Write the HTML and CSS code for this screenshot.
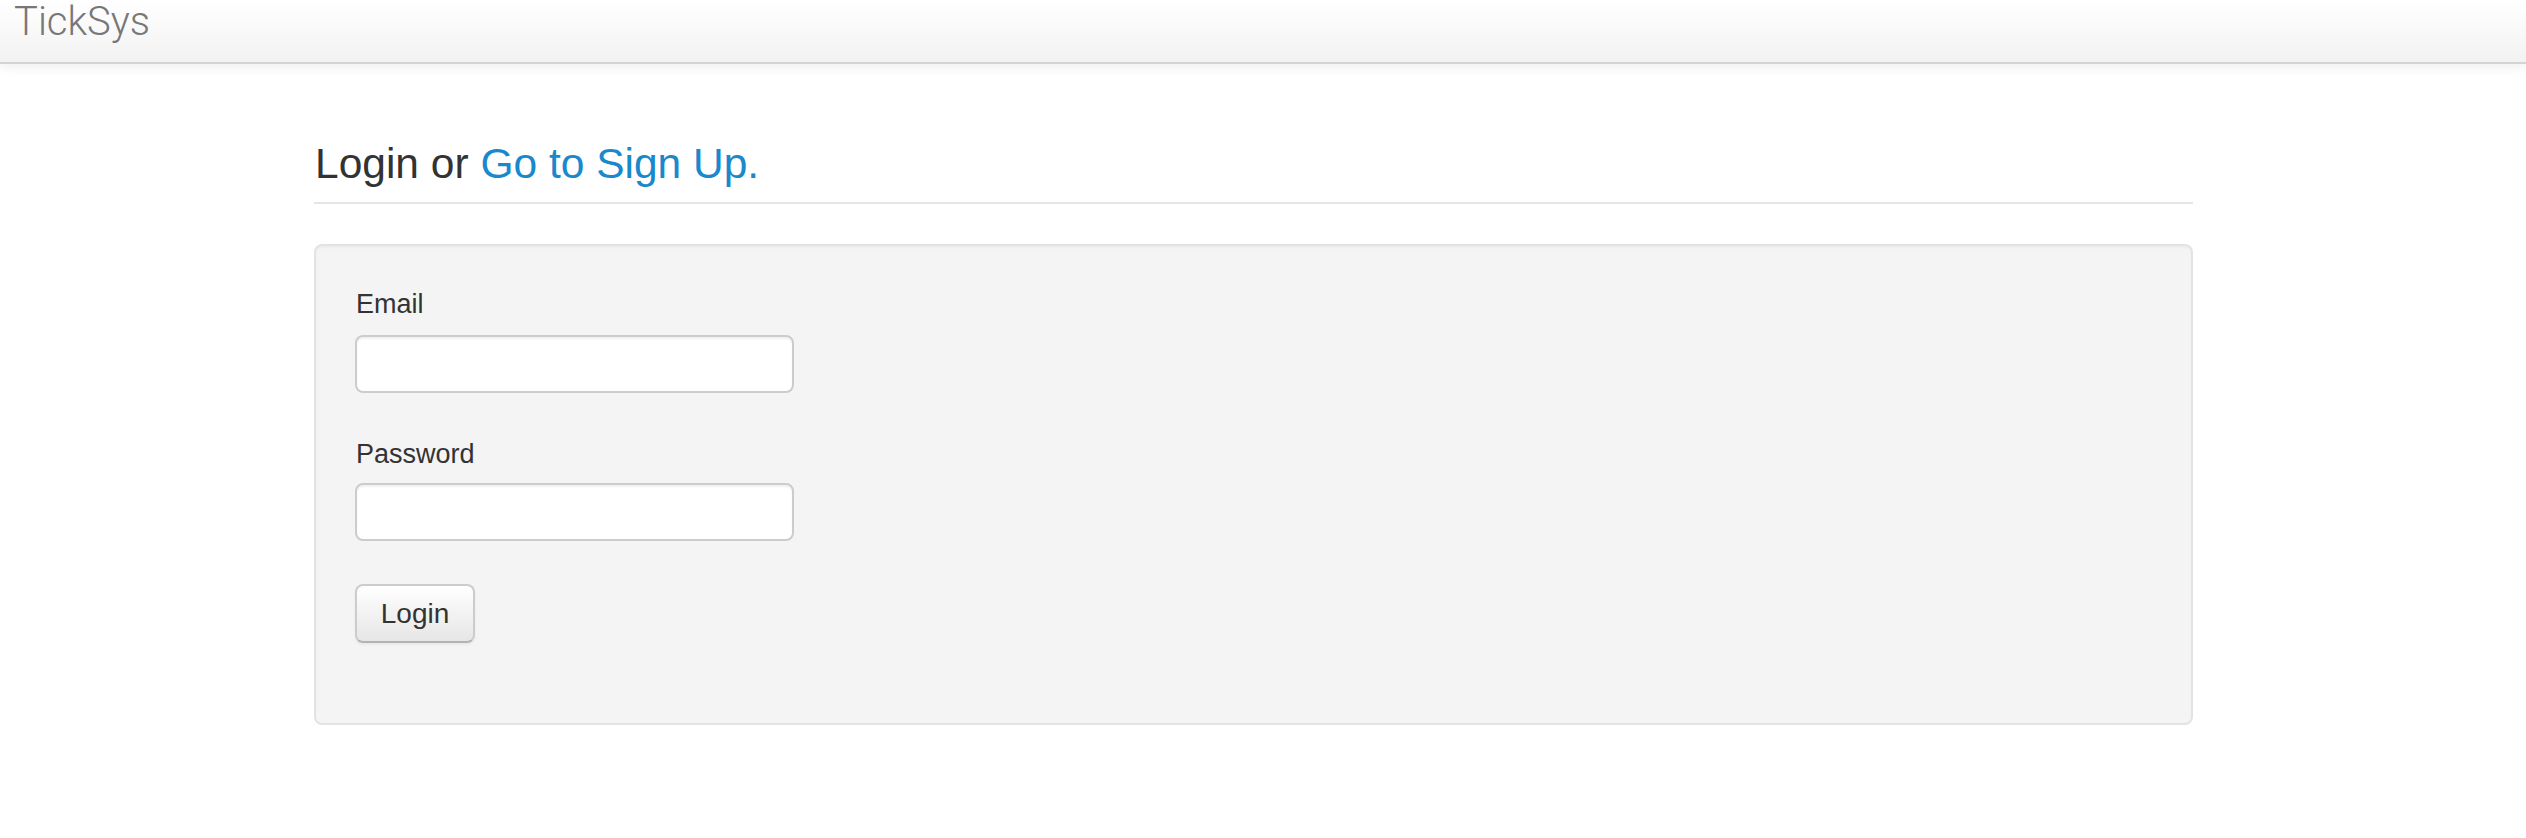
FILE: index.html
```html
<!DOCTYPE html>
<html>
<head>
<meta charset="utf-8">
<title>TickSys</title>
<link rel="stylesheet" href="styles.css">
</head>
<body>
<header class="navbar">
  <a class="brand" href="#">TickSys</a>
</header>
<main class="container">
  <h1 class="page-title">Login or <a href="#" class="link">Go to Sign Up.</a></h1>
  <form class="well">
    <div class="group">
      <label class="label" for="email">Email</label>
      <input class="field" id="email" type="text">
    </div>
    <div class="group">
      <label class="label" for="password">Password</label>
      <input class="field" id="password" type="password">
    </div>
    <button class="btn" type="button">Login</button>
  </form>
</main>
</body>
</html>
```
FILE: styles.css
```css
html, body {
  margin: 0;
  padding: 0;
  background: #ffffff;
  font-family: "Liberation Sans", Arial, sans-serif;
  color: #333333;
}

.navbar {
  height: 62px;
  background: linear-gradient(#ffffff, #f2f2f2);
  border-bottom: 2px solid #d4d4d4;
  box-shadow: 0 2px 12px rgba(0, 0, 0, 0.08);
}

.brand {
  display: block;
  padding-left: 14px;
  font-family: Roboto, "Liberation Sans", sans-serif;
  font-weight: 300;
  font-size: 40px;
  line-height: 44px;
  color: #777777;
  text-decoration: none;
}

.container {
  width: 1879px;
  margin-left: 314px;
}

.page-title {
  margin: 76px 0 0;
  padding: 0 0 14px 1px;
  font-size: 42.5px;
  font-weight: normal;
  line-height: 48px;
  border-bottom: 2px solid #e5e5e5;
}

.link {
  color: #1a88cc;
  text-decoration: none;
}

.well {
  margin-top: 40px;
  padding: 40px 39px 80px;
  background: #f4f4f4;
  border: 2px solid #e3e3e3;
  border-radius: 8px;
  box-shadow: inset 0 2px 2px rgba(0, 0, 0, 0.03);
}

.group {
  display: flex;
  flex-direction: column;
  align-items: flex-start;
  margin-bottom: 43px;
}

.label {
  font-size: 27px;
  line-height: 36px;
  color: #333333;
  margin-left: 1px;
}

.group:first-child .label {
  margin-bottom: 13px;
}

.group:nth-child(2) .label {
  margin-bottom: 11px;
}

.field {
  box-sizing: border-box;
  width: 439px;
  height: 58px;
  margin: 0;
  border: 2px solid #cccccc;
  border-radius: 8px;
  background: #ffffff;
  box-shadow: inset 0 2px 2px rgba(0, 0, 0, 0.06);
  font-size: 27px;
}

.btn {
  box-sizing: border-box;
  width: 120px;
  height: 59px;
  padding: 0;
  border: 2px solid #cccccc;
  border-bottom-color: #b3b3b3;
  border-radius: 8px;
  background: linear-gradient(#ffffff, #e6e6e6);
  box-shadow: inset 0 2px 0 rgba(255, 255, 255, 0.2), 0 2px 3px rgba(0, 0, 0, 0.05);
  font-family: "Liberation Sans", Arial, sans-serif;
  font-size: 28px;
  color: #333333;
}
```
